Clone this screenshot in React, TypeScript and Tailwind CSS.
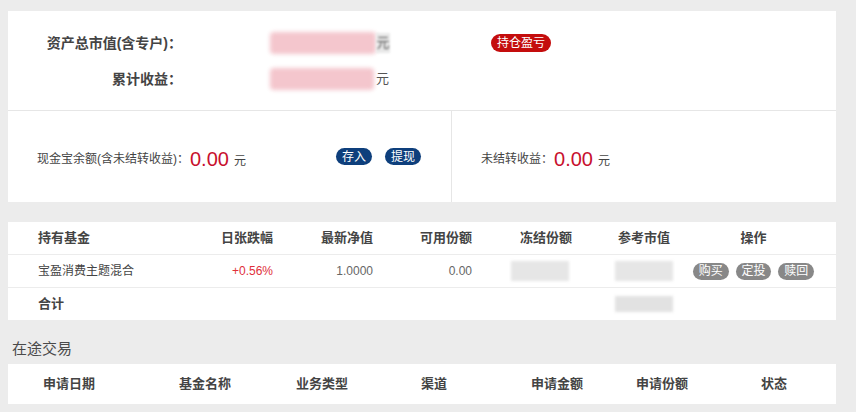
import React from 'react';

const font = { fontFamily: '"Liberation Sans", "Noto Sans CJK SC", sans-serif' };

const holdCols = [
  { title: '持有基金', w: 'w-[182px] pl-[30px] text-left' },
  { title: '日张跌幅', w: 'w-[83px] text-right' },
  { title: '最新净值', w: 'w-[100px] text-right' },
  { title: '可用份额', w: 'w-[124px] pr-[25px] text-right' },
  { title: '冻结份额', w: 'w-[98px] text-center' },
  { title: '参考市值', w: 'w-[98px] text-center' },
  { title: '操作', w: 'w-[121px] text-center' },
];

const transitCols = [
  { title: '申请日期', w: 'w-[122px]' },
  { title: '基金名称', w: 'w-[150px]' },
  { title: '业务类型', w: 'w-[84px]' },
  { title: '渠道', w: 'w-[140px]' },
  { title: '申请金额', w: 'w-[106px]' },
  { title: '申请份额', w: 'w-[104px]' },
  { title: '状态', w: 'w-[120px]' },
];

// masked value blocks, as in the screenshot
const PinkBlur = ({ w }: { w: string }) => (
  <div className={`${w} h-[22px] bg-[#f4c6cd] blur-[2px] rounded-sm`} />
);

const GrayBlur = () => (
  <div className="w-[58px] h-[20px] bg-[#e6e6e6] blur-[1.5px]" />
);

const Pill = ({ children, color }: { children: React.ReactNode; color: string }) => (
  <span className={`inline-flex items-center justify-center h-[17px] w-[36px] rounded-full text-white text-[12px] leading-none ${color}`}>
    {children}
  </span>
);

export default function App() {
  return (
    <div className="min-h-[412px] w-[856px] bg-[#ececec] pt-[11px] px-[8px] pb-[10px] text-[#444]" style={font}>
      {/* asset summary */}
      <div className="w-[828px] bg-white">
        <div className="h-[100px] pt-[14px] border-b border-[#e6e6e6]">
          <div className="flex items-center h-[36px]">
            <div className="w-[174px] text-right text-[14px] font-bold text-[#444]">资产总市值(含专户)：</div>
            <div className="ml-[88px] flex items-center">
              <PinkBlur w="w-[106px]" />
              <span className="text-[13px] text-[#555] w-[14px] text-center bg-[#e8e8e8] blur-[1px]">元</span>
            </div>
            <span className="ml-[101px] inline-flex items-center h-[18px] px-[6px] rounded-full bg-[#c40d0d] text-white text-[12px]">持仓盈亏</span>
          </div>
          <div className="flex items-center h-[36px]">
            <div className="w-[174px] text-right text-[14px] font-bold text-[#444]">累计收益：</div>
            <div className="ml-[88px] flex items-center">
              <PinkBlur w="w-[104px]" />
              <span className="text-[13px] text-[#555] ml-[2px]">元</span>
            </div>
          </div>
        </div>
        <div className="flex h-[91px]">
          <div className="w-[444px] border-r border-[#e6e6e6] flex items-center pl-[29px] pr-[30px] pt-[5px]">
            <span className="text-[12px] text-[#444]">现金宝余额(含未结转收益)：</span>
            <span className="text-[20px] text-[#c8102e] ml-[1px]">0.00</span>
            <span className="text-[12px] text-[#444] ml-[5px] mt-[3px]">元</span>
            <div className="ml-auto flex gap-[13px] mb-[5px]">
              <Pill color="bg-[#0e3f7c]">存入</Pill>
              <Pill color="bg-[#0e3f7c]">提现</Pill>
            </div>
          </div>
          <div className="flex-1 flex items-center pl-[29px] pt-[5px]">
            <span className="text-[12px] text-[#444]">未结转收益：</span>
            <span className="text-[20px] text-[#c8102e] ml-[1px]">0.00</span>
            <span className="text-[12px] text-[#444] ml-[5px] mt-[3px]">元</span>
          </div>
        </div>
      </div>

      {/* holdings */}
      <div className="mt-[20px] w-[828px] bg-white">
        <div className="flex items-center h-[33px] border-b border-[#ececec]">
          {holdCols.map((c) => (
            <div key={c.title} className={`${c.w} text-[13px] font-bold text-[#444]`}>{c.title}</div>
          ))}
        </div>
        <div className="flex items-center h-[33px] border-b border-[#ececec] text-[12px]">
          <div className={`${holdCols[0].w} text-[#444]`}>宝盈消费主题混合</div>
          <div className={`${holdCols[1].w} text-[#e0303a]`}>+0.56%</div>
          <div className={`${holdCols[2].w} text-[#666]`}>1.0000</div>
          <div className={`${holdCols[3].w} text-[#666]`}>0.00</div>
          <div className={`${holdCols[4].w} flex pl-[14px]`}><GrayBlur /></div>
          <div className={`${holdCols[5].w} flex pl-[20px]`}><GrayBlur /></div>
          <div className={`${holdCols[6].w} flex justify-center gap-[7px]`}>
            <Pill color="bg-[#888888]">购买</Pill>
            <Pill color="bg-[#888888]">定投</Pill>
            <Pill color="bg-[#888888]">赎回</Pill>
          </div>
        </div>
        <div className="flex items-center h-[32px]">
          <div className={`${holdCols[0].w} text-[13px] font-bold text-[#444]`}>合计</div>
          <div className="w-[405px]" />
          <div className={`${holdCols[5].w} flex pl-[20px]`}>
            <div className="w-[58px] h-[16px] bg-[#e2e2e2] blur-[1.5px]" />
          </div>
        </div>
      </div>

      {/* in-transit trades */}
      <div className="mt-[19px] pl-[4px] text-[15px] text-[#4a4a4a] leading-[20px]">在途交易</div>
      <div className="mt-[5px] w-[828px] h-[40px] bg-white flex items-center">
        {transitCols.map((c) => (
          <div key={c.title} className={`${c.w} text-center text-[13px] font-bold text-[#444]`}>{c.title}</div>
        ))}
      </div>
    </div>
  );
}
